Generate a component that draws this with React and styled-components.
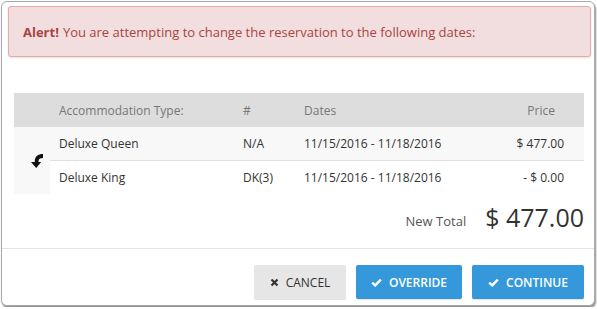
import React from "react";
import styled, { createGlobalStyle } from "styled-components";

const Global = createGlobalStyle`
  html, body {
    margin: 0;
    padding: 0;
    background: #ffffff;
    font-family: "Open Sans", "Liberation Sans", sans-serif;
  }
`;

const Modal = styled.div`
  margin: 1px;
  width: 592px;
  height: 303px;
  border: 1px solid #a8a8a8;
  border-radius: 6px;
  box-shadow: 1px 2px 2px rgba(0, 0, 0, 0.45);
  background: #fff;
  display: flex;
  flex-direction: column;
  overflow: hidden;
`;

const Alert = styled.div`
  margin: 4px 3px 0 6px;
  height: 49px;
  padding: 0 14px;
  display: flex;
  align-items: center;
  background: #f2dede;
  border: 1px solid #e8a9a9;
  border-radius: 3px;
  box-shadow: 0 1px 2px rgba(0, 0, 0, 0.12);
  color: #a94442;
  font-size: 13px;
  strong {
    font-weight: 700;
    margin-right: 4px;
  }
`;

const Body = styled.div`
  padding: 36px 10px 0 12px;
  border-bottom: 1px solid #e3e3e3;
  height: 155px;
`;

const Table = styled.table`
  width: 100%;
  border-collapse: collapse;
  font-size: 12px;
  color: #333;
`;

const Th = styled.th`
  background: #dddddd;
  color: #777;
  font-weight: 400;
  height: 34px;
  text-align: ${(p) => (p.$right ? "right" : "left")};
  padding: 0 ${(p) => (p.$right ? "29px" : "0")} 0 ${(p) => p.$pl || "0"};
  width: ${(p) => p.$w || "auto"};
`;

const IconCell = styled.td`
  background: #f8f8f8;
  width: 36px;
  vertical-align: middle;
  padding: 0;
  svg {
    display: block;
    margin-left: 16px;
  }
`;

const Td = styled.td`
  height: 33px;
  text-align: ${(p) => (p.$right ? "right" : "left")};
  padding: 0 ${(p) => (p.$right ? "20px" : "0")} 0 ${(p) => p.$pl || "0"};
  background: ${(p) => (p.$shade ? "#f8f8f8" : "#fff")};
  border-bottom: ${(p) => (p.$line ? "1px solid #e0e0e0" : "none")};
`;

const TotalRow = styled.div`
  display: flex;
  justify-content: flex-end;
  align-items: center;
  gap: 19px;
  margin-top: 6px;
`;

const TotalLabel = styled.span`
  font-size: 13px;
  color: #555;
  margin-top: 7px;
`;

const TotalValue = styled.span`
  font-size: 25px;
  color: #333;
`;

const Footer = styled.div`
  flex: 1;
  display: flex;
  justify-content: flex-end;
  align-items: flex-start;
  gap: 10px;
  padding: 16px 10px 0 0;
`;

const Button = styled.button`
  height: 34px;
  width: ${(p) => p.$w};
  border: none;
  border-radius: 2px;
  display: flex;
  align-items: center;
  justify-content: center;
  gap: 7px;
  font-family: "Open Sans", "Liberation Sans", sans-serif;
  font-size: 12px;
  text-transform: uppercase;
  background: ${(p) => (p.$primary ? "#3498db" : "#e6e6e6")};
  color: ${(p) => (p.$primary ? "#fff" : "#333")};
  font-weight: ${(p) => (p.$primary ? 600 : 400)};
  box-shadow: 0 1px 1px rgba(0, 0, 0, 0.12);
`;

const CurveArrow = () => (
  <svg width="13" height="15" viewBox="0 0 13 15">
    <path
      d="M13 1 C8 1 4.8 3.5 4.8 8 L4.8 9 L1 9 L6.2 15 L11.2 9 L8.5 9 L8.5 8.2 C8.5 6 10 5 13 5 Z"
      fill="#111"
    />
  </svg>
);

const Cross = () => (
  <svg width="9" height="9" viewBox="0 0 9 9">
    <path d="M1.5 1.5 L7.5 7.5 M7.5 1.5 L1.5 7.5" stroke="#333" strokeWidth="2.2" />
  </svg>
);

const Check = () => (
  <svg width="11" height="9" viewBox="0 0 11 9">
    <path d="M1.2 4.6 L4.2 7.4 L9.8 1.6" stroke="#fff" strokeWidth="2.4" fill="none" />
  </svg>
);

export default function App() {
  return (
    <>
      <Global />
      <Modal>
        <Alert>
          <strong>Alert!</strong> You are attempting to change the reservation to the following dates:
        </Alert>
        <Body>
          <Table>
            <thead>
              <tr>
                <Th $w="36px" />
                <Th $pl="9px" $w="184px">Accommodation Type:</Th>
                <Th $w="61px">#</Th>
                <Th>Dates</Th>
                <Th $right>Price</Th>
              </tr>
            </thead>
            <tbody>
              <tr>
                <IconCell rowSpan={2}>
                  <CurveArrow />
                </IconCell>
                <Td $pl="9px" $shade $line>Deluxe Queen</Td>
                <Td $shade $line>N/A</Td>
                <Td $shade $line>11/15/2016 - 11/18/2016</Td>
                <Td $right $shade $line>$ 477.00</Td>
              </tr>
              <tr>
                <Td $pl="9px">Deluxe King</Td>
                <Td>DK(3)</Td>
                <Td>11/15/2016 - 11/18/2016</Td>
                <Td $right>- $ 0.00</Td>
              </tr>
            </tbody>
          </Table>
          <TotalRow>
            <TotalLabel>New Total</TotalLabel>
            <TotalValue>$ 477.00</TotalValue>
          </TotalRow>
        </Body>
        <Footer>
          <Button $w="92px">
            <Cross /> Cancel
          </Button>
          <Button $primary $w="106px">
            <Check /> Override
          </Button>
          <Button $primary $w="112px">
            <Check /> Continue
          </Button>
        </Footer>
      </Modal>
    </>
  );
}
